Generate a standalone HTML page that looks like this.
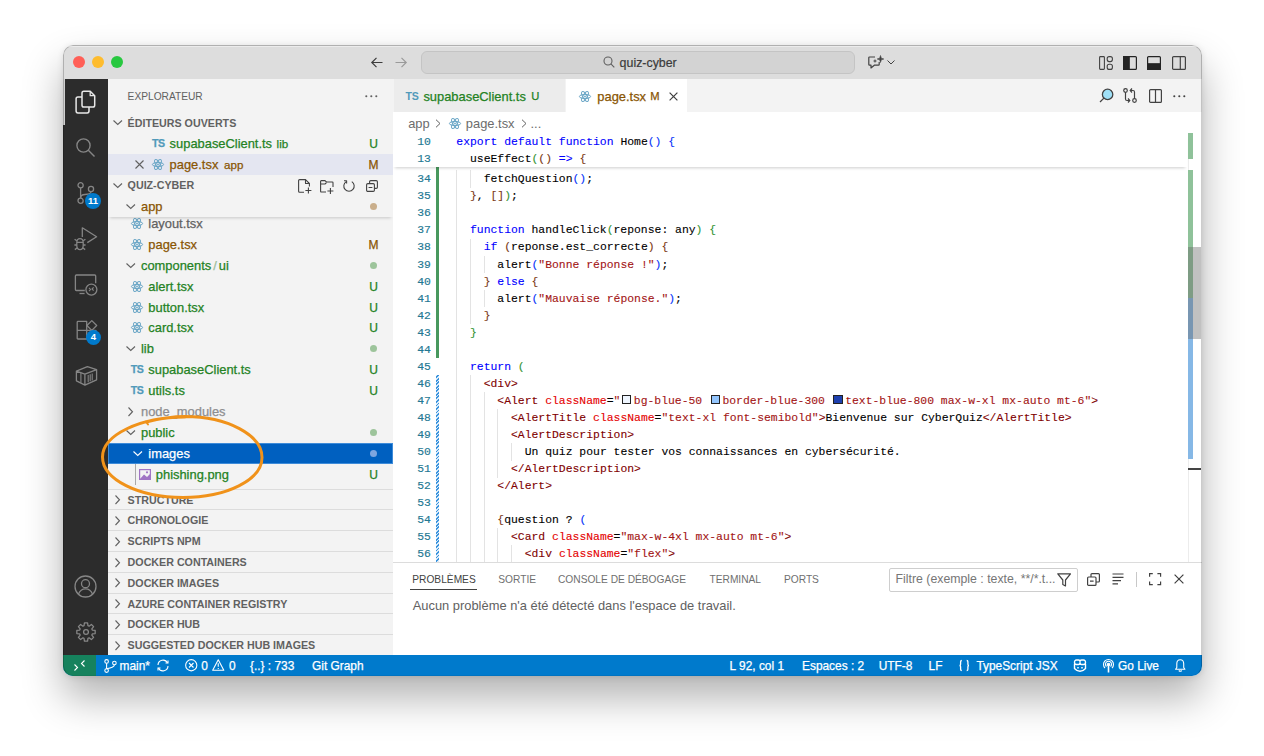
<!DOCTYPE html>
<html><head><meta charset="utf-8">
<style>
*{box-sizing:border-box;margin:0;padding:0}
html,body{width:1264px;height:756px;overflow:hidden;background:#fff;font-family:"Liberation Sans",sans-serif}
.abs{position:absolute}
#win{position:absolute;left:63px;top:45px;width:1139px;height:630.5px;border-radius:10px;overflow:hidden;background:#fff;
 box-shadow:0 22px 40px rgba(0,0,0,.30),0 1px 6px rgba(0,0,0,.10)}
#title{left:0;top:0;width:1139px;height:34px;background:#dddddd}
.tl{position:absolute;top:11px;width:12px;height:12px;border-radius:50%}
#act{left:0;top:34px;width:45px;height:576px;background:#2c2c2c}
#side{left:45px;top:34px;width:285px;height:576px;background:#f3f3f3;overflow:hidden}
#editor{left:330px;top:34px;width:809px;height:576px;background:#fff}
#status{left:0;top:610px;width:1139px;height:20.5px;background:#007acc;color:#fff;font-size:11.9px}
.row{position:absolute;left:0;width:285px;height:21px;line-height:21px;font-size:12.9px;white-space:nowrap}
.sh{position:absolute;left:0;width:285px;height:21px;line-height:21px;font-size:10.7px;font-weight:bold;color:#616161;white-space:nowrap}
.g{color:#238223}
.m{color:#895503}
#side .row span, #editor .tabt, .sb{-webkit-text-stroke:0.25px currentColor}
svg{position:absolute;overflow:visible}
.badge{background:#007acc;color:#fff;font-weight:bold;font-size:9.5px;text-align:center;line-height:15.5px;border-radius:8px}
.ts{font-weight:bold;font-size:10.6px;color:#519aba;letter-spacing:-0.4px}
.deco{font-size:12px}
.row .abs{line-height:21px}
.row span.deco{margin-top:1.1px}
.tabt{top:0.6px;line-height:33px;font-size:12.9px}
.bc{top:33.6px;line-height:21px;font-size:12.9px;color:#6c6c6c}
.ln{position:absolute;left:0;width:37.8px;margin-top:0.9px;-webkit-text-stroke:0.15px currentColor;text-align:right;font-family:"Liberation Mono",monospace;font-size:11.4px;line-height:17.05px;height:17.05px;color:#237893}
.cl{position:absolute;margin-top:0.9px;-webkit-text-stroke:0.1px currentColor;font-family:"Liberation Mono",monospace;font-size:11.4px;line-height:17.05px;height:17.05px;white-space:pre}
.ig{position:absolute;width:1px;background:#e3e3e3}
.cbox{display:inline-block;width:13.4px;height:10px;vertical-align:-1px;position:relative}
.cbox i{position:absolute;left:1.5px;top:0;width:9.5px;height:9.5px;border:1px solid #222;box-sizing:border-box}
.sb{top:0.6px;line-height:20.5px;font-size:11.9px;color:#fff}
.pt{top:490.4px;line-height:21px;font-size:10.2px;color:#6f6f6f}
</style></head><body>
<svg width="0" height="0" style="position:absolute">
 <defs>
  <g id="react" fill="none" stroke="#6aa6c6" stroke-width="1">
   <ellipse cx="6" cy="5.5" rx="5.6" ry="2.1"/>
   <ellipse cx="6" cy="5.5" rx="5.6" ry="2.1" transform="rotate(60 6 5.5)"/>
   <ellipse cx="6" cy="5.5" rx="5.6" ry="2.1" transform="rotate(120 6 5.5)"/>
   <circle cx="6" cy="5.5" r="0.9" fill="#6aa6c6" stroke="none"/>
  </g>
  <g id="chev" fill="none" stroke="#616161" stroke-width="1.1"><path d="M0.5 2.5 L4.75 6.5 L9 2.5"/></g>
  <g id="chevr" fill="none" stroke="#616161" stroke-width="1.1"><path d="M2.5 0.5 L6.5 4.75 L2.5 9"/></g>
 </defs>
</svg>
<div id="win">
 <div id="title" class="abs">
  <div class="tl" style="left:10.2px;background:#ff5f57"></div>
  <div class="tl" style="left:29.2px;background:#febc2e"></div>
  <div class="tl" style="left:48px;background:#28c840"></div>
  <svg style="left:307.6px;top:11.5px" width="12" height="11" viewBox="0 0 12 11" fill="none" stroke="#3c3c3c" stroke-width="1.2"><path d="M11.5 5.5 H0.8 M5.5 0.8 L0.8 5.5 L5.5 10.2"/></svg>
  <svg style="left:331.8px;top:11.5px" width="12" height="11" viewBox="0 0 12 11" fill="none" stroke="#9a9a9a" stroke-width="1.2"><path d="M0.5 5.5 H11.2 M6.5 0.8 L11.2 5.5 L6.5 10.2"/></svg>
  <div class="abs" style="left:358.3px;top:6.3px;width:433.3px;height:22.3px;border-radius:6px;background:#d3d3d3;border:1px solid #c4c4c4"></div>
  <svg style="left:539.5px;top:11px" width="12" height="12" viewBox="0 0 12 12" fill="none" stroke="#5f5f5f" stroke-width="1.1"><circle cx="5" cy="5" r="4"/><path d="M7.9 7.9 L11.3 11.3"/></svg>
  <div class="abs" style="left:556.6px;top:7px;line-height:22.3px;font-size:12.4px;color:#3b3b3b;-webkit-text-stroke:0.2px currentColor">quiz-cyber</div>
  <svg style="left:804.8px;top:10px" width="16" height="14" viewBox="0 0 16 14" fill="none" stroke="#424242" stroke-width="1.2" stroke-linejoin="round"><path d="M7 2 H1.5 Q0.8 2 0.8 2.7 V9.5 Q0.8 10.2 1.5 10.2 H3 V13 L6.3 10.2 H10.5 Q11.2 10.2 11.2 9.5 V7"/><path d="M12.5 0.5 L13.3 3.2 L15.8 4 L13.3 4.8 L12.5 7.5 L11.7 4.8 L9.2 4 L11.7 3.2 Z" fill="#424242" stroke-width="0.6"/><path d="M7 4.5 L7.4 5.6 L8.5 6 L7.4 6.4 L7 7.5 L6.6 6.4 L5.5 6 L6.6 5.6Z" fill="#424242" stroke-width="0.4"/></svg>
  <svg style="left:823.8px;top:15px" width="8" height="5" viewBox="0 0 8 5" fill="none" stroke="#424242" stroke-width="1"><path d="M0.5 0.5 L4 4 L7.5 0.5"/></svg>
  <svg style="left:1036px;top:11.1px" width="14" height="14" viewBox="0 0 14 14" fill="none" stroke="#424242" stroke-width="1.1"><rect x="0.6" y="0.6" width="4.8" height="12.8" rx="0.8"/><rect x="8.2" y="0.6" width="5.2" height="5" rx="2"/><rect x="8.2" y="8.2" width="5.2" height="5.2" rx="2"/></svg>
  <svg style="left:1060.4px;top:11.1px" width="14" height="14" viewBox="0 0 14 14" fill="none" stroke="#242424" stroke-width="1.2"><rect x="0.6" y="0.6" width="12.8" height="12.8" rx="1"/><rect x="0.6" y="0.6" width="5.6" height="12.8" fill="#242424"/></svg>
  <svg style="left:1084.4px;top:11.1px" width="14" height="14" viewBox="0 0 14 14" fill="none" stroke="#242424" stroke-width="1.2"><rect x="0.6" y="0.6" width="12.8" height="12.8" rx="1"/><rect x="0.6" y="7.8" width="12.8" height="5.6" fill="#242424"/></svg>
  <svg style="left:1109.3px;top:11.1px" width="14" height="14" viewBox="0 0 14 14" fill="none" stroke="#424242" stroke-width="1.2"><rect x="0.6" y="0.6" width="12.8" height="12.8" rx="1"/><path d="M8.3 0.6 V13.4"/></svg>

 </div>
 <div id="act" class="abs">
 <div class="abs" style="left:0;top:0;width:1.5px;height:45.6px;background:#d0d0d0"></div>
 <svg style="left:11px;top:10px" width="24" height="26" viewBox="0 0 24 26" fill="none" stroke="#e8e8e8" stroke-width="1.5" stroke-linejoin="round">
  <path d="M9.8 2.2 H16.2 L20.7 6.7 V16.2 Q20.7 18 18.9 18 H9.8 Q8 18 8 16.2 V4 Q8 2.2 9.8 2.2 Z"/>
  <path d="M16.2 2.2 V6.7 H20.7" stroke-width="1.3"/>
  <path d="M8 7.9 H3.9 Q2.1 7.9 2.1 9.7 V22.1 Q2.1 23.9 3.9 23.9 H13.2 Q15 23.9 15 22.1 V18"/>
 </svg>
 <svg style="left:12px;top:57.5px" width="21" height="21" viewBox="0 0 21 21" fill="none" stroke="#858585" stroke-width="1.4">
  <circle cx="8.5" cy="8.5" r="6.6"/><path d="M13.3 13.3 L19.5 19.5"/>
 </svg>
  <svg style="left:14px;top:100px" width="24" height="26" viewBox="0 0 24 26" fill="none" stroke="#858585" stroke-width="1.3">
  <circle cx="3.6" cy="6.2" r="2.6"/><circle cx="14" cy="10" r="2.6"/><circle cx="3.6" cy="21.7" r="2.6"/>
  <path d="M3.6 8.8 V19.1"/><path d="M14 12.6 Q14 15.5 8 15.5 Q3.6 15.5 3.6 19"/>
 </svg>
 <div class="abs badge" style="left:22px;top:114.2px;width:16px;height:15.5px">11</div>
 <svg style="left:10px;top:147px" width="26" height="26" viewBox="0 0 26 26" fill="none" stroke="#858585" stroke-width="1.3" stroke-linejoin="round">
  <path d="M9.3 11.1 V1.8 L23.6 10.8 L14.3 16.6"/>
  <path d="M3.8 16.5 Q3.8 12.6 7 12.6 Q10.2 12.6 10.2 16.5 V19.5 Q10.2 23.6 7 23.6 Q3.8 23.6 3.8 19.5 Z M3.8 16.3 H10.2"/>
  <path d="M3.8 14.8 L1.6 13.2 M10.2 14.8 L12.4 13.2 M3.8 19 H1.4 M10.2 19 H12.6 M4 22 L1.8 23.6 M10 22 L12.2 23.6"/>
 </svg>
 <svg style="left:11px;top:194px" width="25" height="24" viewBox="0 0 25 24" fill="none" stroke="#858585" stroke-width="1.3">
  <path d="M10.8 17.5 H2.4 Q1.4 17.5 1.4 16.5 V3 Q1.4 2 2.4 2 H20.7 Q21.7 2 21.7 3 V10.2"/><path d="M5.5 20.5 H10.6"/>
  <circle cx="17.4" cy="16.6" r="5.5"/><path d="M15 14.8 L16.5 16.5 L15 18.2 M19.6 14.3 L18 16 L19.6 17.7" stroke-width="1.1"/>
 </svg>
 <svg style="left:12px;top:238px" width="24" height="24" viewBox="0 0 24 24" fill="none" stroke="#858585" stroke-width="1.3" stroke-linejoin="round">
  <path d="M3 4.4 H11.7 V22 H3 Q2.2 22 2.2 21.2 V5.2 Q2.2 4.4 3 4.4 Z M2.2 13.3 H11.7 M11.7 13.3 H20.2 Q21 13.3 21 14.1 V21.2 Q21 22 20.2 22 H11.7"/>
  <path d="M16.8 3.6 L21.7 8.5 L16.8 13.4 L11.9 8.5 Z"/>
 </svg>
 <div class="abs badge" style="left:23px;top:250.8px;width:14.8px;height:14.8px;line-height:14.8px">4</div>
 <svg style="left:10.5px;top:283.5px" width="25" height="25" viewBox="0 0 25 25" fill="none" stroke="#858585" stroke-width="1.3" stroke-linejoin="round">
  <path d="M2.4 8.1 L13.4 3.6 L22.6 6.6 V16.8 L10.9 22.1 L2.4 17.8 Z M2.4 8.1 L10.9 11.1 L22.6 6.6 M10.9 11.1 V22.1"/>
  <path d="M6.9 9.8 V19.8 M14.2 12 V19.2 M16.2 11.2 V18.3 M18.2 10.4 V17.4" stroke-width="1.1"/>
 </svg>
 <svg style="left:11.2px;top:496px" width="23" height="23" viewBox="0 0 23 23" fill="none" stroke="#858585" stroke-width="1.3">
  <circle cx="11.5" cy="11.5" r="10.5"/><circle cx="11.5" cy="8.7" r="4"/><path d="M4.4 19.3 Q6.5 13.8 11.5 13.8 Q16.5 13.8 18.6 19.3"/>
 </svg>
 <svg style="left:11.9px;top:542.4px" width="22" height="22" viewBox="0 0 22 22" fill="none" stroke="#858585" stroke-width="1.3" stroke-linejoin="round">
  <path d="M17.31 9.05 L20.17 9.43 L20.17 12.57 L17.31 12.95 L16.84 14.08 L18.59 16.37 L16.37 18.59 L14.08 16.84 L12.95 17.31 L12.57 20.17 L9.43 20.17 L9.05 17.31 L7.92 16.84 L5.63 18.59 L3.41 16.37 L5.16 14.08 L4.69 12.95 L1.83 12.57 L1.83 9.43 L4.69 9.05 L5.16 7.92 L3.41 5.63 L5.63 3.41 L7.92 5.16 L9.05 4.69 L9.43 1.83 L12.57 1.83 L12.95 4.69 L14.08 5.16 L16.37 3.41 L18.59 5.63 L16.84 7.92 Z"/><circle cx="11" cy="11" r="2.4"/>
 </svg>
</div>
 <div id="side" class="abs"><div class="abs" style="left:19.6px;top:1.3px;height:33.2px;line-height:33.2px;font-size:10.2px;color:#616161">EXPLORATEUR</div><svg style="left:257px;top:16px" width="13" height="3" viewBox="0 0 13 3" fill="#616161"><circle cx="1.3" cy="1.3" r="1.05"/><circle cx="6.3" cy="1.3" r="1.05"/><circle cx="11.3" cy="1.3" r="1.05"/></svg><div class="sh" style="top:33.15px"><svg style="left:5px;top:6px" width="10" height="9" viewBox="0 0 10 9"><use href="#chev"/></svg><span class="abs" style="left:19.6px;top:1.3px">ÉDITEURS OUVERTS</span></div><div class="row" style="top:54.05px;"><span class="abs ts" style="left:44px;top:0">TS</span><span class="abs g" style="left:61.6px;top:0;">supabaseClient.ts</span><span class="abs g" style="left:168.6px;top:0;font-size:11.6px">lib</span><span class="abs deco g" style="left:258px;top:0;width:15px;text-align:center">U</span></div><div class="row" style="top:74.95px;background:#e4e6f1"><svg style="left:26.8px;top:6px" width="9" height="9" viewBox="0 0 9 9" fill="none" stroke="#616161" stroke-width="1.1"><path d="M0.5 0.5 L8.5 8.5 M8.5 0.5 L0.5 8.5"/></svg><svg style="left:44px;top:5px" width="12" height="11" viewBox="0 0 12 11"><use href="#react"/></svg><span class="abs m" style="left:61.6px;top:0;">page.tsx</span><span class="abs m" style="left:116px;top:0;font-size:11.6px">app</span><span class="abs deco m" style="left:258px;top:0;width:15px;text-align:center">M</span></div><div class="sh" style="top:95.85px"><svg style="left:5px;top:6px" width="10" height="9" viewBox="0 0 10 9"><use href="#chev"/></svg><span class="abs" style="left:19.6px;top:0.6px">QUIZ-CYBER</span><svg style="left:190.1px;top:4.25px" width="14" height="15" viewBox="0 0 14 15" fill="none" stroke="#424242" stroke-width="1.1" stroke-linejoin="round">
  <path d="M6 13.3 H1.6 Q0.6 13.3 0.6 12.3 V1.6 Q0.6 0.6 1.6 0.6 H7.5 L11.4 4.5 V7.5"/><path d="M7.5 0.6 V4.5 H11.4"/><path d="M7.4 11.5 H13.4 M10.4 8.5 V14.5"/></svg>
 <svg style="left:212.1px;top:5.05px" width="14" height="14" viewBox="0 0 14 14" fill="none" stroke="#424242" stroke-width="1.1" stroke-linejoin="round">
  <path d="M6 12 H1.3 Q0.6 12 0.6 11.3 V1.3 Q0.6 0.6 1.3 0.6 H5 L6.5 2 H12.3 Q13 2 13 2.7 V7"/><path d="M0.6 4 H5 L6.5 2.7"/><path d="M7.4 11 H13.4 M10.4 8 V14"/></svg>
 <svg style="left:235.4px;top:5.45px" width="12" height="12" viewBox="0 0 12 12" fill="none" stroke="#424242" stroke-width="1.1">
  <path d="M3.2 1.6 A5.2 5.2 0 1 0 8.8 1.6"/><path d="M1 0.8 H3.6 V3.4" stroke-linejoin="round"/></svg>
 <svg style="left:258.3px;top:5.05px" width="12" height="12" viewBox="0 0 12 12" fill="none" stroke="#424242" stroke-width="1.1">
  <rect x="0.6" y="3.6" width="7.8" height="7.8" rx="1.2"/><path d="M3.6 3.6 V1.8 Q3.6 0.6 4.8 0.6 H10.2 Q11.4 0.6 11.4 1.8 V7.2 Q11.4 8.4 10.2 8.4 H8.4"/><path d="M2.6 7.5 H6.4"/></svg>
</div><div class="row" style="top:133.98px;"><svg style="left:22.8px;top:5px" width="12" height="11" viewBox="0 0 12 11"><use href="#react"/></svg><span class="abs " style="left:40.3px;top:0;color:#616161">layout.tsx</span></div><div class="row" style="top:154.86px;"><svg style="left:22.8px;top:5px" width="12" height="11" viewBox="0 0 12 11"><use href="#react"/></svg><span class="abs m" style="left:40.3px;top:0;">page.tsx</span><span class="abs deco m" style="left:258px;top:0;width:15px;text-align:center">M</span></div><div class="row" style="top:175.74px;"><svg style="left:18px;top:6px" width="10" height="9" viewBox="0 0 10 9"><use href="#chev"/></svg><span class="abs g" style="left:33px;top:0;">components<span style="color:#9bbd9b;margin:0 2px">/</span>ui</span><span class="abs" style="left:261.5px;top:7px;width:7px;height:7px;border-radius:50%;background:#9dc49b"></span></div><div class="row" style="top:196.62px;"><svg style="left:22.8px;top:5px" width="12" height="11" viewBox="0 0 12 11"><use href="#react"/></svg><span class="abs g" style="left:40.3px;top:0;">alert.tsx</span><span class="abs deco g" style="left:258px;top:0;width:15px;text-align:center">U</span></div><div class="row" style="top:217.50px;"><svg style="left:22.8px;top:5px" width="12" height="11" viewBox="0 0 12 11"><use href="#react"/></svg><span class="abs g" style="left:40.3px;top:0;">button.tsx</span><span class="abs deco g" style="left:258px;top:0;width:15px;text-align:center">U</span></div><div class="row" style="top:238.38px;"><svg style="left:22.8px;top:5px" width="12" height="11" viewBox="0 0 12 11"><use href="#react"/></svg><span class="abs g" style="left:40.3px;top:0;">card.tsx</span><span class="abs deco g" style="left:258px;top:0;width:15px;text-align:center">U</span></div><div class="row" style="top:259.26px;"><svg style="left:18px;top:6px" width="10" height="9" viewBox="0 0 10 9"><use href="#chev"/></svg><span class="abs g" style="left:33px;top:0;">lib</span><span class="abs" style="left:261.5px;top:7px;width:7px;height:7px;border-radius:50%;background:#9dc49b"></span></div><div class="row" style="top:280.14px;"><span class="abs ts" style="left:22.8px;top:0">TS</span><span class="abs g" style="left:40.3px;top:0;">supabaseClient.ts</span><span class="abs deco g" style="left:258px;top:0;width:15px;text-align:center">U</span></div><div class="row" style="top:301.02px;"><span class="abs ts" style="left:22.8px;top:0">TS</span><span class="abs g" style="left:40.3px;top:0;">utils.ts</span><span class="abs deco g" style="left:258px;top:0;width:15px;text-align:center">U</span></div><div class="row" style="top:321.90px;"><svg style="left:18px;top:6px" width="9" height="10" viewBox="0 0 9 10"><use href="#chevr"/></svg><span class="abs " style="left:33px;top:0;color:#8e8e90">node_modules</span></div><div class="row" style="top:342.78px;"><svg style="left:18px;top:6px" width="10" height="9" viewBox="0 0 10 9"><use href="#chev"/></svg><span class="abs g" style="left:33px;top:0;">public</span><span class="abs" style="left:261.5px;top:7px;width:7px;height:7px;border-radius:50%;background:#9dc49b"></span></div><div class="row" style="top:363.66px;background:#0060c0;box-shadow:inset 0 0 0 1px #3d8bd9"><svg style="left:24.8px;top:6px" width="10" height="9" viewBox="0 0 10 9"><path d="M0.5 2.5 L4.75 6.5 L9 2.5" fill="none" stroke="#fff" stroke-width="1.1"/></svg><span class="abs " style="left:40.3px;top:0;color:#fff">images</span><span class="abs" style="left:261.5px;top:7px;width:7px;height:7px;border-radius:50%;background:#7ea6e0"></span></div><div class="row" style="top:384.54px;"><span class="abs" style="left:27px;top:0;width:1px;height:21px;background:#a9a9a9"></span><svg style="left:30.6px;top:5px" width="12" height="11" viewBox="0 0 12 11"><rect x="0.6" y="0.6" width="10.8" height="9.8" fill="none" stroke="#a074c4" stroke-width="1.2"/><path d="M1 10 L5 5.5 L8 8 L11 5 V10.4 H1Z" fill="#a074c4"/><circle cx="8" cy="3.3" r="1.1" fill="#a074c4"/></svg><span class="abs g" style="left:47.8px;top:0;">phishing.png</span><span class="abs deco g" style="left:258px;top:0;width:15px;text-align:center">U</span></div><div class="row" style="top:116.75px;background:#f3f3f3;box-shadow:0 3px 3px -2px rgba(0,0,0,.18);z-index:2"><svg style="left:18px;top:6px" width="10" height="9" viewBox="0 0 10 9"><use href="#chev"/></svg><span class="abs m" style="left:33px;top:0;">app</span><span class="abs" style="left:261.5px;top:7px;width:7px;height:7px;border-radius:50%;background:#c9ae8b"></span></div><div class="sh" style="top:409.60px;height:20.8px;line-height:21px;border-top:1px solid #dcdcdc"><svg style="left:5px;top:5.5px" width="9" height="10" viewBox="0 0 9 10"><use href="#chevr"/></svg><span class="abs" style="left:19.6px">STRUCTURE</span></div><div class="sh" style="top:430.40px;height:20.8px;line-height:21px;border-top:1px solid #dcdcdc"><svg style="left:5px;top:5.5px" width="9" height="10" viewBox="0 0 9 10"><use href="#chevr"/></svg><span class="abs" style="left:19.6px">CHRONOLOGIE</span></div><div class="sh" style="top:451.20px;height:20.8px;line-height:21px;border-top:1px solid #dcdcdc"><svg style="left:5px;top:5.5px" width="9" height="10" viewBox="0 0 9 10"><use href="#chevr"/></svg><span class="abs" style="left:19.6px">SCRIPTS NPM</span></div><div class="sh" style="top:472.00px;height:20.8px;line-height:21px;border-top:1px solid #dcdcdc"><svg style="left:5px;top:5.5px" width="9" height="10" viewBox="0 0 9 10"><use href="#chevr"/></svg><span class="abs" style="left:19.6px">DOCKER CONTAINERS</span></div><div class="sh" style="top:492.80px;height:20.8px;line-height:21px;border-top:1px solid #dcdcdc"><svg style="left:5px;top:5.5px" width="9" height="10" viewBox="0 0 9 10"><use href="#chevr"/></svg><span class="abs" style="left:19.6px">DOCKER IMAGES</span></div><div class="sh" style="top:513.60px;height:20.8px;line-height:21px;border-top:1px solid #dcdcdc"><svg style="left:5px;top:5.5px" width="9" height="10" viewBox="0 0 9 10"><use href="#chevr"/></svg><span class="abs" style="left:19.6px">AZURE CONTAINER REGISTRY</span></div><div class="sh" style="top:534.40px;height:20.8px;line-height:21px;border-top:1px solid #dcdcdc"><svg style="left:5px;top:5.5px" width="9" height="10" viewBox="0 0 9 10"><use href="#chevr"/></svg><span class="abs" style="left:19.6px">DOCKER HUB</span></div><div class="sh" style="top:555.20px;height:20.8px;line-height:21px;border-top:1px solid #dcdcdc"><svg style="left:5px;top:5.5px" width="9" height="10" viewBox="0 0 9 10"><use href="#chevr"/></svg><span class="abs" style="left:19.6px">SUGGESTED DOCKER HUB IMAGES</span></div></div>
 <div id="editor" class="abs">
 <div class="abs" style="left:0;top:0;width:809px;height:33px;background:#f3f3f3"></div>
 <div class="abs" style="left:0.6px;top:0;width:172.4px;height:33px;background:#ececec;border-right:1px solid #f3f3f3"></div>
 <span class="abs ts" style="left:12.6px;top:0.5px;line-height:33px">TS</span>
 <span class="abs tabt g" style="left:30.4px">supabaseClient.ts</span>
 <span class="abs tabt g" style="left:138.3px;font-size:11.2px">U</span>
 <div class="abs" style="left:173px;top:0;width:120.5px;height:33px;background:#fff"></div>
 <svg style="left:186px;top:11.5px" width="12" height="11" viewBox="0 0 12 11"><use href="#react"/></svg>
 <span class="abs tabt m" style="left:204.3px">page.tsx</span>
 <span class="abs tabt m" style="left:257.3px;font-size:11.2px">M</span>
 <svg style="left:276px;top:12.5px" width="9" height="9" viewBox="0 0 9 9" fill="none" stroke="#424242" stroke-width="1.2"><path d="M0.6 0.6 L8.4 8.4 M8.4 0.6 L0.6 8.4"/></svg>
 <svg style="left:706px;top:9px" width="15" height="15" viewBox="0 0 15 15" fill="none" stroke="#424242" stroke-width="1.3">
  <circle cx="8.6" cy="6.4" r="5.2" fill="#9fe0f7"/><path d="M4.9 10.1 L1 14"/></svg>
 <svg style="left:730px;top:9px" width="14" height="15" viewBox="0 0 14 15" fill="none" stroke="#424242" stroke-width="1.2">
  <circle cx="2.5" cy="2.5" r="1.8"/><circle cx="11.5" cy="12.5" r="1.8"/><path d="M2.5 4.3 V11 Q2.5 12.5 4 12.5 H6.5 M5 10.5 L6.8 12.5 L5 14.5"/><path d="M11.5 10.7 V4 Q11.5 2.5 10 2.5 H7.5 M9 0.5 L7.2 2.5 L9 4.5"/></svg>
 <svg style="left:755.8px;top:9.5px" width="13" height="14" viewBox="0 0 13 14" fill="none" stroke="#424242" stroke-width="1.2">
  <rect x="0.6" y="0.6" width="11.8" height="12.8" rx="1"/><path d="M6.5 0.6 V13.4"/></svg>
 <svg style="left:780px;top:16px" width="13" height="3" viewBox="0 0 13 3" fill="#424242"><circle cx="1.3" cy="1.3" r="1.05"/><circle cx="6.3" cy="1.3" r="1.05"/><circle cx="11.3" cy="1.3" r="1.05"/></svg>
 <div class="abs bc" style="left:15.2px">app</div>
 <svg style="left:42px;top:40px" width="6" height="9" viewBox="0 0 6 9" fill="none" stroke="#616161" stroke-width="1"><path d="M1 0.7 L5 4.5 L1 8.3"/></svg>
 <svg style="left:56px;top:39px" width="12" height="11" viewBox="0 0 12 11"><use href="#react"/></svg>
 <div class="abs bc" style="left:72.8px">page.tsx</div>
 <svg style="left:128px;top:40px" width="6" height="9" viewBox="0 0 6 9" fill="none" stroke="#616161" stroke-width="1"><path d="M1 0.7 L5 4.5 L1 8.3"/></svg>
 <div class="abs bc" style="left:137.5px">...</div>
 <div class="abs" id="code" style="left:0;top:0;width:808px;height:483px;overflow:hidden">
  <div class="ln" style="top:91.38px">34</div><div class="ig" style="left:63.30px;top:91.38px;height:17.35px"></div><div class="ig" style="left:76.98px;top:91.38px;height:17.35px"></div><div class="cl" style="top:91.38px;left:90.66px"><span style="color:#000000">fetchQuestion</span><span style="color:#0431fa">()</span><span style="color:#000000">;</span></div><div class="ln" style="top:108.42px">35</div><div class="ig" style="left:63.30px;top:108.42px;height:17.35px"></div><div class="cl" style="top:108.42px;left:76.98px"><span style="color:#7b3814">}</span><span style="color:#000000">, </span><span style="color:#7b3814">[]</span><span style="color:#319331">)</span><span style="color:#000000">;</span></div><div class="ln" style="top:125.47px">36</div><div class="ig" style="left:63.30px;top:125.47px;height:17.35px"></div><div class="ln" style="top:142.53px">37</div><div class="ig" style="left:63.30px;top:142.53px;height:17.35px"></div><div class="cl" style="top:142.53px;left:76.98px"><span style="color:#0000ff">function</span><span style="color:#000000"> handleClick</span><span style="color:#319331">(</span><span style="color:#000000">reponse: any</span><span style="color:#319331">)</span><span style="color:#000000"> </span><span style="color:#319331">{</span></div><div class="ln" style="top:159.58px">38</div><div class="ig" style="left:63.30px;top:159.58px;height:17.35px"></div><div class="ig" style="left:76.98px;top:159.58px;height:17.35px"></div><div class="cl" style="top:159.58px;left:90.66px"><span style="color:#0000ff">if</span><span style="color:#000000"> </span><span style="color:#7b3814">(</span><span style="color:#000000">reponse.est_correcte</span><span style="color:#7b3814">)</span><span style="color:#000000"> </span><span style="color:#7b3814">{</span></div><div class="ln" style="top:176.62px">39</div><div class="ig" style="left:63.30px;top:176.62px;height:17.35px"></div><div class="ig" style="left:76.98px;top:176.62px;height:17.35px"></div><div class="ig" style="left:90.66px;top:176.62px;height:17.35px"></div><div class="cl" style="top:176.62px;left:104.34px"><span style="color:#000000">alert</span><span style="color:#0431fa">(</span><span style="color:#a31515">"Bonne réponse !"</span><span style="color:#0431fa">)</span><span style="color:#000000">;</span></div><div class="ln" style="top:193.68px">40</div><div class="ig" style="left:63.30px;top:193.68px;height:17.35px"></div><div class="ig" style="left:76.98px;top:193.68px;height:17.35px"></div><div class="cl" style="top:193.68px;left:90.66px"><span style="color:#7b3814">}</span><span style="color:#000000"> </span><span style="color:#0000ff">else</span><span style="color:#000000"> </span><span style="color:#7b3814">{</span></div><div class="ln" style="top:210.72px">41</div><div class="ig" style="left:63.30px;top:210.72px;height:17.35px"></div><div class="ig" style="left:76.98px;top:210.72px;height:17.35px"></div><div class="ig" style="left:90.66px;top:210.72px;height:17.35px"></div><div class="cl" style="top:210.72px;left:104.34px"><span style="color:#000000">alert</span><span style="color:#0431fa">(</span><span style="color:#a31515">"Mauvaise réponse."</span><span style="color:#0431fa">)</span><span style="color:#000000">;</span></div><div class="ln" style="top:227.78px">42</div><div class="ig" style="left:63.30px;top:227.78px;height:17.35px"></div><div class="ig" style="left:76.98px;top:227.78px;height:17.35px"></div><div class="cl" style="top:227.78px;left:90.66px"><span style="color:#7b3814">}</span></div><div class="ln" style="top:244.83px">43</div><div class="ig" style="left:63.30px;top:244.83px;height:17.35px"></div><div class="cl" style="top:244.83px;left:76.98px"><span style="color:#319331">}</span></div><div class="ln" style="top:261.88px">44</div><div class="ig" style="left:63.30px;top:261.88px;height:17.35px"></div><div class="ln" style="top:278.93px">45</div><div class="ig" style="left:63.30px;top:278.93px;height:17.35px"></div><div class="cl" style="top:278.93px;left:76.98px"><span style="color:#0000ff">return</span><span style="color:#000000"> </span><span style="color:#319331">(</span></div><div class="ln" style="top:295.98px">46</div><div class="ig" style="left:63.30px;top:295.98px;height:17.35px"></div><div class="ig" style="left:76.98px;top:295.98px;height:17.35px"></div><div class="cl" style="top:295.98px;left:90.66px"><span style="color:#800000">&lt;div&gt;</span></div><div class="ln" style="top:313.03px">47</div><div class="ig" style="left:63.30px;top:313.03px;height:17.35px"></div><div class="ig" style="left:76.98px;top:313.03px;height:17.35px"></div><div class="ig" style="left:90.66px;top:313.03px;height:17.35px"></div><div class="cl" style="top:313.03px;left:104.34px"><span style="color:#800000">&lt;Alert</span><span style="color:#000000"> </span><span style="color:#e50000">className</span><span style="color:#000000">=</span><span style="color:#a31515">"</span><span class="cbox"><i style="background:#eff6ff"></i></span><span style="color:#a31515">bg-blue-50 </span><span class="cbox"><i style="background:#93c5fd"></i></span><span style="color:#a31515">border-blue-300 </span><span class="cbox"><i style="background:#1e40af"></i></span><span style="color:#a31515">text-blue-800 max-w-xl mx-auto mt-6"</span><span style="color:#800000">&gt;</span></div><div class="ln" style="top:330.08px">48</div><div class="ig" style="left:63.30px;top:330.08px;height:17.35px"></div><div class="ig" style="left:76.98px;top:330.08px;height:17.35px"></div><div class="ig" style="left:90.66px;top:330.08px;height:17.35px"></div><div class="ig" style="left:104.34px;top:330.08px;height:17.35px"></div><div class="cl" style="top:330.08px;left:118.02px"><span style="color:#800000">&lt;AlertTitle</span><span style="color:#000000"> </span><span style="color:#e50000">className</span><span style="color:#000000">=</span><span style="color:#a31515">"text-xl font-semibold"</span><span style="color:#800000">&gt;</span><span style="color:#000000">Bienvenue sur CyberQuiz</span><span style="color:#800000">&lt;/AlertTitle&gt;</span></div><div class="ln" style="top:347.12px">49</div><div class="ig" style="left:63.30px;top:347.12px;height:17.35px"></div><div class="ig" style="left:76.98px;top:347.12px;height:17.35px"></div><div class="ig" style="left:90.66px;top:347.12px;height:17.35px"></div><div class="ig" style="left:104.34px;top:347.12px;height:17.35px"></div><div class="cl" style="top:347.12px;left:118.02px"><span style="color:#800000">&lt;AlertDescription&gt;</span></div><div class="ln" style="top:364.18px">50</div><div class="ig" style="left:63.30px;top:364.18px;height:17.35px"></div><div class="ig" style="left:76.98px;top:364.18px;height:17.35px"></div><div class="ig" style="left:90.66px;top:364.18px;height:17.35px"></div><div class="ig" style="left:104.34px;top:364.18px;height:17.35px"></div><div class="ig" style="left:118.02px;top:364.18px;height:17.35px"></div><div class="cl" style="top:364.18px;left:131.70px"><span style="color:#000000">Un quiz pour tester vos connaissances en cybersécurité.</span></div><div class="ln" style="top:381.23px">51</div><div class="ig" style="left:63.30px;top:381.23px;height:17.35px"></div><div class="ig" style="left:76.98px;top:381.23px;height:17.35px"></div><div class="ig" style="left:90.66px;top:381.23px;height:17.35px"></div><div class="ig" style="left:104.34px;top:381.23px;height:17.35px"></div><div class="cl" style="top:381.23px;left:118.02px"><span style="color:#800000">&lt;/AlertDescription&gt;</span></div><div class="ln" style="top:398.28px">52</div><div class="ig" style="left:63.30px;top:398.28px;height:17.35px"></div><div class="ig" style="left:76.98px;top:398.28px;height:17.35px"></div><div class="ig" style="left:90.66px;top:398.28px;height:17.35px"></div><div class="cl" style="top:398.28px;left:104.34px"><span style="color:#800000">&lt;/Alert&gt;</span></div><div class="ln" style="top:415.33px">53</div><div class="ig" style="left:63.30px;top:415.33px;height:17.35px"></div><div class="ig" style="left:76.98px;top:415.33px;height:17.35px"></div><div class="ig" style="left:90.66px;top:415.33px;height:17.35px"></div><div class="ln" style="top:432.38px">54</div><div class="ig" style="left:63.30px;top:432.38px;height:17.35px"></div><div class="ig" style="left:76.98px;top:432.38px;height:17.35px"></div><div class="ig" style="left:90.66px;top:432.38px;height:17.35px"></div><div class="cl" style="top:432.38px;left:104.34px"><span style="color:#7b3814">{</span><span style="color:#000000">question ? </span><span style="color:#0431fa">(</span></div><div class="ln" style="top:449.43px">55</div><div class="ig" style="left:63.30px;top:449.43px;height:17.35px"></div><div class="ig" style="left:76.98px;top:449.43px;height:17.35px"></div><div class="ig" style="left:90.66px;top:449.43px;height:17.35px"></div><div class="ig" style="left:104.34px;top:449.43px;height:17.35px"></div><div class="cl" style="top:449.43px;left:118.02px"><span style="color:#800000">&lt;Card</span><span style="color:#000000"> </span><span style="color:#e50000">className</span><span style="color:#000000">=</span><span style="color:#a31515">"max-w-4xl mx-auto mt-6"</span><span style="color:#800000">&gt;</span></div><div class="ln" style="top:466.48px">56</div><div class="ig" style="left:63.30px;top:466.48px;height:17.35px"></div><div class="ig" style="left:76.98px;top:466.48px;height:17.35px"></div><div class="ig" style="left:90.66px;top:466.48px;height:17.35px"></div><div class="ig" style="left:104.34px;top:466.48px;height:17.35px"></div><div class="ig" style="left:118.02px;top:466.48px;height:17.35px"></div><div class="cl" style="top:466.48px;left:131.70px"><span style="color:#800000">&lt;div</span><span style="color:#000000"> </span><span style="color:#e50000">className</span><span style="color:#000000">=</span><span style="color:#a31515">"flex"</span><span style="color:#800000">&gt;</span></div>
  <div class="abs" style="left:43px;top:88.38px;width:2.6px;height:190.55px;background:#48985d"></div><div class="abs" style="left:43px;top:295.98px;width:2.6px;height:187.55px;background:repeating-linear-gradient(-45deg,#3a93dd 0,#3a93dd 1.3px,#d9ebfa 1.3px,#d9ebfa 2.5px)"></div>
  <div class="abs" style="left:0;top:54px;width:794px;height:34.3px;background:#fff;z-index:3;box-shadow:0 3px 3px -2px rgba(0,0,0,.2)"><div class="ln" style="top:0px">10</div><div class="cl" style="top:0;left:63.30px"><span style="color:#0000ff">export</span><span style="color:#000000"> </span><span style="color:#0000ff">default</span><span style="color:#000000"> </span><span style="color:#0000ff">function</span><span style="color:#000000"> Home</span><span style="color:#0431fa">()</span><span style="color:#000000"> </span><span style="color:#0431fa">{</span></div><div class="ln" style="top:17.1px">13</div><div class="cl" style="top:17.1px;left:76.98px"><span style="color:#000000">useEffect</span><span style="color:#319331">(</span><span style="color:#7b3814">()</span><span style="color:#000000"> </span><span style="color:#0000ff">=&gt;</span><span style="color:#000000"> </span><span style="color:#7b3814">{</span></div></div>
 </div>
 <div class="abs" style="left:794.6px;top:54px;width:1px;height:429px;background:#ececec"></div>
 <div class="abs" style="left:795px;top:54px;width:4.9px;height:26px;background:#8fc29a"></div>
 <div class="abs" style="left:795px;top:91.2px;width:4.9px;height:127.6px;background:#8fc29a"></div>
 <div class="abs" style="left:795px;top:219px;width:4.9px;height:160.5px;background:#86b8e6"></div>
 <div class="abs" style="left:795px;top:168px;width:12.6px;height:91.60000000000002px;background:rgba(100,100,100,.4)"></div>
 <div class="abs" style="left:795px;top:389.3px;width:12.6px;height:1.5px;background:#444"></div>
 <div class="abs" style="left:0;top:483px;width:809px;height:93px;background:#fff;border-top:1px solid #dcdcdc"></div>
 <div class="abs pt" style="left:19.3px;color:#424242">PROBLÈMES</div>
 <div class="abs" style="left:17.3px;top:510.2px;width:66.7px;height:1px;background:#424242"></div>
 <div class="abs pt" style="left:105.3px">SORTIE</div>
 <div class="abs pt" style="left:165px">CONSOLE DE DÉBOGAGE</div>
 <div class="abs pt" style="left:316.5px">TERMINAL</div>
 <div class="abs pt" style="left:391px">PORTS</div>
 <div class="abs" style="left:19.7px;top:518.4px;height:18px;line-height:18px;font-size:12.9px;color:#616161">Aucun problème n'a été détecté dans l'espace de travail.</div>
 <div class="abs" style="left:496px;top:489.3px;width:189.4px;height:23.3px;border:1px solid #cecece;border-radius:2px;background:#fff"></div>
 <div class="abs" style="left:502.6px;top:489.3px;height:23.3px;line-height:23.3px;font-size:12.3px;color:#767676">Filtre (exemple : texte, **/*.t...</div>
 <svg style="left:664.4px;top:493.8px" width="14.3" height="14" viewBox="0 0 14.3 14" fill="none" stroke="#424242" stroke-width="1.2" stroke-linejoin="round"><path d="M0.8 0.8 H13.5 L8.5 7 V13 L5.8 11.5 V7 Z"/></svg>
 <svg style="left:693.7px;top:493.6px" width="13" height="13" viewBox="0 0 13 13" fill="none" stroke="#424242" stroke-width="1.2"><rect x="0.6" y="4" width="8.4" height="8.4" rx="1"/><path d="M4 4 V1.6 Q4 0.6 5 0.6 H11.4 Q12.4 0.6 12.4 1.6 V8 Q12.4 9 11.4 9 H9 M3 8.2 H6.6"/></svg>
 <svg style="left:718.6px;top:494.2px" width="12" height="12" viewBox="0 0 12 12" fill="none" stroke="#424242" stroke-width="1.2"><path d="M0.5 1 H11.5 M0.5 4.3 H11.5 M0.5 7.6 H9 M0.5 10.9 H6"/></svg>
 <div class="abs" style="left:743px;top:493.3px;width:1px;height:14.3px;background:#c8c8c8"></div>
 <svg style="left:755.8px;top:494px" width="12.2" height="12.2" viewBox="0 0 12.2 12.2" fill="none" stroke="#424242" stroke-width="1.2"><path d="M0.6 3.8 V0.6 H3.8 M8.4 0.6 H11.6 V3.8 M11.6 8.4 V11.6 H8.4 M3.8 11.6 H0.6 V8.4"/></svg>
 <svg style="left:781.4px;top:495.3px" width="10" height="10" viewBox="0 0 10 10" fill="none" stroke="#424242" stroke-width="1.2"><path d="M0.6 0.6 L9.4 9.4 M9.4 0.6 L0.6 9.4"/></svg>
</div>
 <div class="abs" style="left:0;top:0;width:1139px;height:630.5px;border-radius:10px;border:1px solid rgba(0,0,0,.2);border-bottom-color:rgba(0,0,0,.05);z-index:20;pointer-events:none"></div>
 <div class="abs" style="left:1px;top:1px;width:1136px;height:1px;background:rgba(255,255,255,.45);z-index:20"></div>
 <div id="status" class="abs">
  <div class="abs" style="left:0;top:0;width:32.5px;height:20.5px;background:#16825d"></div>
  <svg style="left:10.9px;top:4.5px" width="11" height="11" viewBox="0 0 11 11" fill="none" stroke="#fff" stroke-width="1.1"><path d="M0.5 4.5 L3.5 7.5 L0.5 10.5 M10.5 0.5 L7.5 3.5 L10.5 6.5"/></svg>
  <svg style="left:40.9px;top:3.5px" width="13" height="14" viewBox="0 0 13 14" fill="none" stroke="#fff" stroke-width="1.1"><circle cx="2.6" cy="2.4" r="1.8"/><circle cx="2.6" cy="11.6" r="1.8"/><circle cx="10.4" cy="4" r="1.8"/><path d="M2.6 4.2 V9.8 M10.4 5.8 Q10.4 8.5 2.6 9.8"/></svg>
  <div class="abs sb" style="left:56.5px">main*</div>
  <svg style="left:92.8px;top:4px" width="14" height="13" viewBox="0 0 14 13" fill="none" stroke="#fff" stroke-width="1.1"><path d="M2 6 A5 5 0 0 1 11.5 4 M12 7 A5 5 0 0 1 2.5 9"/><path d="M9.5 4 H12 V1.5 M4.5 9 H2 V11.5"/></svg>
  <svg style="left:122px;top:4px" width="12.5" height="12.5" viewBox="0 0 12.5 12.5" fill="none" stroke="#fff" stroke-width="1.1"><circle cx="6.25" cy="6.25" r="5.6"/><path d="M4 4 L8.5 8.5 M8.5 4 L4 8.5"/></svg>
  <div class="abs sb" style="left:138.3px">0</div>
  <svg style="left:149.2px;top:3.8px" width="12.5" height="12" viewBox="0 0 12.5 12" fill="none" stroke="#fff" stroke-width="1.1" stroke-linejoin="round"><path d="M6.25 0.8 L11.8 11.3 H0.7 Z M6.25 4.3 V7.8 M6.25 9 V10"/></svg>
  <div class="abs sb" style="left:166px">0</div>
  <div class="abs sb" style="left:187px">{..} : 733</div>
  <div class="abs sb" style="left:249px">Git Graph</div>
  <div class="abs sb" style="left:666.6px">L 92, col 1</div>
  <div class="abs sb" style="left:739px">Espaces : 2</div>
  <div class="abs sb" style="left:815.7px">UTF-8</div>
  <div class="abs sb" style="left:865.6px">LF</div>
  <svg style="left:896.4px;top:5px" width="10.5" height="11" viewBox="0 0 10.5 11" fill="none" stroke="#fff" stroke-width="1.3"><path d="M2.8 0.5 Q1.6 0.5 1.6 1.7 V4.3 Q1.6 5.5 0.5 5.5 Q1.6 5.5 1.6 6.7 V9.3 Q1.6 10.5 2.8 10.5 M7.7 0.5 Q8.9 0.5 8.9 1.7 V4.3 Q8.9 5.5 10 5.5 Q8.9 5.5 8.9 6.7 V9.3 Q8.9 10.5 7.7 10.5"/></svg>
  <div class="abs sb" style="left:913.4px">TypeScript JSX</div>
  <svg style="left:1010px;top:3.5px" width="14" height="13" viewBox="0 0 14 13" fill="none" stroke="#fff" stroke-width="1.4" stroke-linejoin="round"><path d="M3.5 1 Q1.5 1 1.5 3.5 Q1.5 5.5 3.5 5.5 H5.5 Q7 5.5 7 3.5 Q7 5.5 8.5 5.5 H10.5 Q12.5 5.5 12.5 3.5 Q12.5 1 10.5 1 H8.5 Q7 1 7 2.5 Q7 1 5.5 1 Z"/><path d="M1.5 5 V9.5 Q4 12.3 7 12.3 Q10 12.3 12.5 9.5 V5"/><path d="M5 8 V9.6 M9 8 V9.6" stroke-width="1.5"/></svg>
  <svg style="left:1040px;top:3.5px" width="11" height="14" viewBox="0 0 11 14" fill="none" stroke="#fff" stroke-width="1.1"><path d="M2 9 A5 5 0 1 1 9 9 M3.5 7.5 A3 3 0 1 1 7.5 7.5"/><circle cx="5.5" cy="5.5" r="1.2" fill="#fff"/><path d="M5.5 6.5 V13.5" stroke-width="1.6"/></svg>
  <div class="abs sb" style="left:1055px">Go Live</div>
  <svg style="left:1112.4px;top:3.8px" width="10.5" height="13" viewBox="0 0 10.5 13" fill="none" stroke="#fff" stroke-width="1.1" stroke-linejoin="round"><path d="M5.25 0.8 Q1.8 0.8 1.8 4.8 V8.5 L0.6 10.3 H9.9 L8.7 8.5 V4.8 Q8.7 0.8 5.25 0.8Z M3.8 11.5 Q5.25 13 6.7 11.5"/></svg>
</div>
</div>
<svg style="position:absolute;left:0;top:0;z-index:10" width="1264" height="756" viewBox="0 0 1264 756" fill="none" stroke="#f0921a" stroke-width="3" stroke-linecap="round">
 <path d="M185 417 C 140 417, 102.5 435, 102.5 457 C 102.5 479.4, 138.5 497.5, 183 497.5 C 226.6 497.5, 262 479.9, 262 457.5 C 262 435.1, 227.5 416.5, 185 416.5 C 170 416.5, 158 419, 146 422"/>
 <path d="M146 421.5 L148 424.5" stroke-width="2"/>
</svg>
</body></html>
